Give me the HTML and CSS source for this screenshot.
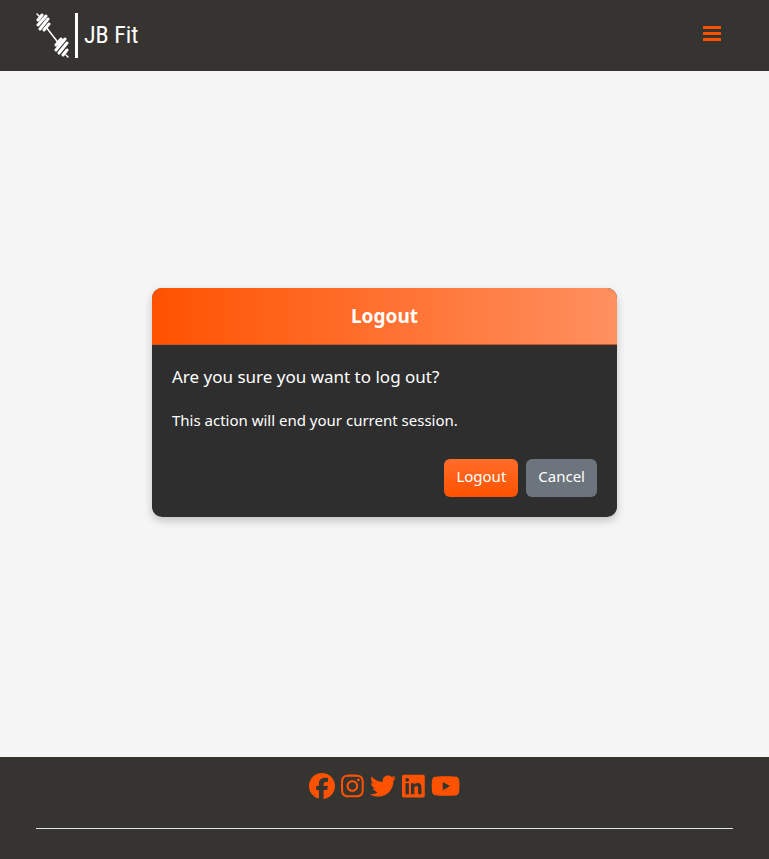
FILE: index.html
```html
<!DOCTYPE html>
<html lang="en">
<head>
<meta charset="utf-8">
<meta name="viewport" content="width=device-width, initial-scale=1">
<title>JB Fit</title>
<link rel="stylesheet" href="styles.css">
</head>
<body>
<header class="navbar">
  <a class="brand" href="#">
    <svg class="brand-icon" viewBox="0 0 33 46" aria-hidden="true">
      <g fill="none" stroke="#fff" stroke-linecap="round">
        <path stroke-width="1.5" d="M1 2l2 2M10 15l14 18M30 43l2 2"/>
        <path stroke-width="3" d="M2 8l4-5M2 13l8-9M4 17l8-10M8 18l5-6M20 33l5-6M20 38l9-11M23 41l8-10M27 43l4-5"/>
      </g>
    </svg>
    <span class="brand-bar"></span>
    <span class="brand-name">JB Fit</span>
  </a>
  <button class="menu-button" type="button" aria-label="Menu">
    <svg viewBox="0 0 18 20" aria-hidden="true"><path d="M1 3h16a1 1 0 0 1 0 3H1a1 1 0 0 1 0-3zM1 9h16a1 1 0 0 1 0 3H1a1 1 0 0 1 0-3zM1 15h16a1 1 0 0 1 0 3H1a1 1 0 0 1 0-3z"/></svg>
  </button>
</header>

<main class="content">
  <section class="card">
    <h1 class="card-header">Logout</h1>
    <div class="card-body">
      <p class="question">Are you sure you want to log out?</p>
      <p class="note">This action will end your current session.</p>
      <div class="actions">
        <button class="button button-primary" type="submit">Logout</button>
        <a class="button button-secondary" href="#">Cancel</a>
      </div>
    </div>
  </section>
</main>

<footer class="footer">
  <nav class="social" aria-label="Social media">
    <a href="#" aria-label="Facebook"><svg viewBox="0 0 512 512"><path d="M512 256C512 114.600 397.400 0 256 0S0 114.600 0 256c0 120 82.700 220.800 194.200 248.500V334.200h-52.800V256h52.800v-33.700c0-87.100 39.400-127.500 125-127.500 16.200 0 44.200 3.200 55.700 6.400V172c-6-.6-16.500-1-29.600-1-42 0-58.200 15.900-58.200 57.200V256h83.600l-14.400 78.200h-69.300v175.900C413.800 494.800 512 386.900 512 256z"/></svg></a>
    <a href="#" aria-label="Instagram"><svg viewBox="0 0 448 512"><path d="M224.100 141c-63.600 0-114.900 51.300-114.900 114.900s51.300 114.900 114.900 114.900S339 319.500 339 255.900 287.700 141 224.100 141zm0 189.600c-41.100 0-74.700-33.500-74.700-74.700s33.500-74.700 74.700-74.700 74.700 33.500 74.700 74.700-33.600 74.700-74.700 74.700zm146.400-194.300c0 14.900-12 26.800-26.800 26.800-14.900 0-26.800-12-26.800-26.800s12-26.800 26.800-26.800 26.800 12 26.800 26.800zm76.100 27.200c-1.700-35.900-9.900-67.700-36.200-93.900-26.200-26.200-58-34.400-93.900-36.200-37-2.100-147.900-2.100-184.900 0-35.800 1.700-67.600 9.900-93.900 36.100s-34.400 58-36.200 93.900c-2.100 37-2.100 147.900 0 184.900 1.700 35.900 9.900 67.700 36.200 93.900s58 34.400 93.900 36.200c37 2.100 147.900 2.100 184.900 0 35.900-1.700 67.700-9.900 93.900-36.200 26.200-26.200 34.400-58 36.200-93.900 2.100-37 2.100-147.800 0-184.800zM398.800 388c-7.800 19.600-22.900 34.700-42.600 42.600-29.500 11.700-99.500 9-132.100 9s-102.700 2.600-132.100-9c-19.600-7.800-34.700-22.900-42.600-42.600-11.700-29.500-9-99.500-9-132.100s-2.600-102.700 9-132.100c7.800-19.600 22.900-34.700 42.600-42.600 29.500-11.700 99.500-9 132.100-9s102.700-2.600 132.100 9c19.600 7.800 34.700 22.900 42.600 42.600 11.700 29.500 9 99.500 9 132.100s2.700 102.700-9 132.100z"/></svg></a>
    <a href="#" aria-label="Twitter"><svg viewBox="0 0 512 512"><path d="M459.370 151.716c.325 4.548.325 9.097.325 13.645 0 138.720-105.583 298.558-298.558 298.558-59.452 0-114.680-17.219-161.137-47.106 8.447.974 16.568 1.299 25.340 1.299 49.055 0 94.213-16.568 130.274-44.832-46.132-.975-84.792-31.188-98.112-72.772 6.498.974 12.995 1.624 19.818 1.624 9.421 0 18.843-1.300 27.614-3.573-48.081-9.747-84.143-51.980-84.143-102.985v-1.299c13.969 7.797 30.214 12.670 47.431 13.319-28.264-18.843-46.781-51.005-46.781-87.391 0-19.492 5.197-37.360 14.294-52.954 51.655 63.675 129.300 105.258 216.365 109.807-1.624-7.797-2.599-15.918-2.599-24.040 0-57.828 46.782-104.934 104.934-104.934 30.213 0 57.502 12.670 76.670 33.137 23.715-4.548 46.456-13.320 66.599-25.340-7.798 24.366-24.366 44.833-46.132 57.827 21.117-2.273 41.584-8.122 60.426-16.243-14.292 20.791-32.161 39.308-52.628 54.253z"/></svg></a>
    <a href="#" aria-label="LinkedIn"><svg viewBox="0 0 448 512"><path d="M416 32H31.900C14.300 32 0 46.500 0 64.300v383.400C0 465.500 14.300 480 31.900 480H416c17.600 0 32-14.500 32-32.300V64.300c0-17.800-14.400-32.300-32-32.300zM135.400 416H69V202.200h66.500V416zm-33.200-243c-21.300 0-38.500-17.300-38.500-38.500S80.900 96 102.200 96c21.200 0 38.500 17.300 38.500 38.500 0 21.300-17.200 38.500-38.500 38.500zm282.100 243h-66.400V312c0-24.800-.5-56.700-34.500-56.700-34.600 0-39.900 27-39.900 54.900V416h-66.400V202.200h63.700v29.200h.9c8.900-16.800 30.600-34.500 62.900-34.500 67.200 0 79.700 44.300 79.700 101.900V416z"/></svg></a>
    <a href="#" aria-label="YouTube"><svg viewBox="0 0 576 512"><path d="M549.655 124.083c-6.281-23.650-24.787-42.276-48.284-48.597C458.781 64 288 64 288 64S117.220 64 74.629 75.486c-23.497 6.322-42.003 24.947-48.284 48.597-11.412 42.867-11.412 132.305-11.412 132.305s0 89.438 11.412 132.305c6.281 23.650 24.787 41.500 48.284 47.821C117.220 448 288 448 288 448s170.780 0 213.371-11.486c23.497-6.321 42.003-24.171 48.284-47.821 11.412-42.867 11.412-132.305 11.412-132.305s0-89.438-11.412-132.305zm-317.510 213.508V175.185l142.739 81.205-142.739 81.201z"/></svg></a>
  </nav>
  <hr class="divider">
</footer>
</body>
</html>
```

FILE: styles.css
```css
* {
  box-sizing: border-box;
}

body {
  display: flex;
  flex-direction: column;
  min-height: 100vh;
  margin: 0;
  background: #f5f5f5;
  color: #fff;
  font-family: "Noto Sans", sans-serif;
  font-size: 15px;
  line-height: 24px;
}

.navbar {
  display: flex;
  align-items: center;
  justify-content: space-between;
  padding: 12px 36px 13px;
  background: #363430;
}

.brand {
  display: flex;
  align-items: center;
  color: #fff;
  text-decoration: none;
}

.brand-icon {
  width: 33px;
  height: 46px;
}

.brand-bar {
  width: 3px;
  height: 45px;
  margin: 0 6px;
  background: #fff;
}

.brand-name {
  font-family: "Liberation Sans Narrow", "Roboto Condensed", "DejaVu Sans Condensed", sans-serif;
  font-size: 24px;
  line-height: 44px;
  white-space: nowrap;
}

.menu-button {
  display: flex;
  padding: 0 12px 4px;
  border: 0;
  background: none;
}

.menu-button svg {
  height: 20px;
  fill: #ff5200;
}

.content {
  display: flex;
  flex: 1;
  align-items: center;
  justify-content: center;
  padding: 24px 12px;
}

.card {
  width: 100%;
  max-width: 465px;
  margin-bottom: 24px;
  overflow: hidden;
  border-radius: 10px;
  background: #2e2e2e;
  box-shadow: 0 4px 8px rgba(0, 0, 0, 0.2);
}

.card-header {
  margin: 0;
  padding: 14px 20px;
  border-bottom: 1px solid #c9582a;
  background: linear-gradient(90deg, #ff5200, #ff9060);
  font-size: 19px;
  font-weight: 700;
  line-height: 28px;
  text-align: center;
}

.card-body {
  padding: 20px;
}

.question {
  margin: 0 0 19px;
  font-size: 17px;
}

.note {
  margin: 0 0 27px;
}

.actions {
  display: flex;
  justify-content: flex-end;
  gap: 8px;
}

.button {
  padding: 5px 12px 9px;
  border: 0;
  border-radius: 6px;
  color: #fff;
  font: inherit;
  text-decoration: none;
}

.button-primary {
  background: linear-gradient(#ff6d2a, #ff5200);
}

.button-secondary {
  background: #6c757d;
}

.footer {
  padding: 16px 36px 30px;
  background: #363430;
}

.social {
  display: flex;
  justify-content: center;
  gap: 6px;
}

.social a {
  display: flex;
}

.social svg {
  height: 26px;
  fill: #ff5200;
}

.divider {
  margin: 29px 0 0;
  border: 0;
  border-top: 1px solid #dee2e6;
}
```
